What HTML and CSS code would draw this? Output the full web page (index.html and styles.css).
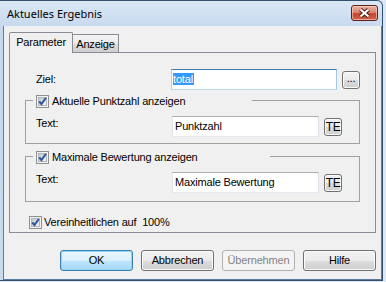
FILE: index.html
```html
<!DOCTYPE html>
<html>
<head>
<meta charset="utf-8">
<link rel="stylesheet" href="styles.css">
</head>
<body>
<div class="window">
  <div class="titlebar">
    <span class="title">Aktuelles Ergebnis</span>
    <div class="close">
      <svg width="25" height="14" viewBox="0 0 25 14">
        <path class="x-out" d="M8.5 3.5 L16.5 10.5 M16.5 3.5 L8.5 10.5"/>
        <path class="x-in" d="M8.5 3.5 L16.5 10.5 M16.5 3.5 L8.5 10.5"/>
      </svg>
    </div>
  </div>
  <div class="client">
    <div class="tabs">
      <div class="tab active">Parameter</div>
      <div class="tab inactive">Anzeige</div>
    </div>
    <div class="page">
      <div class="ziel">
        <span class="lbl lbl-z">Ziel:</span>
        <div class="tb tb-z focus"><span class="sel">total</span></div>
        <div class="btn small dots">...</div>
      </div>
      <div class="group g1">
        <div class="ghead w1">
          <span class="cb"><svg width="13" height="13" viewBox="0 0 13 13"><path class="tick" d="M3.2 6.3 L5.4 9 L9.8 3"/></svg></span>
          <span>Aktuelle Punktzahl anzeigen</span>
        </div>
        <div class="grow">
          <span class="lbl lbl-t">Text:</span>
          <div class="tb tb-t">Punktzahl</div>
          <div class="btn small te">TE</div>
        </div>
      </div>
      <div class="group g2">
        <div class="ghead w2">
          <span class="cb"><svg width="13" height="13" viewBox="0 0 13 13"><path class="tick" d="M3.2 6.3 L5.4 9 L9.8 3"/></svg></span>
          <span>Maximale Bewertung anzeigen</span>
        </div>
        <div class="grow">
          <span class="lbl lbl-t">Text:</span>
          <div class="tb tb-t">Maximale Bewertung</div>
          <div class="btn small te">TE</div>
        </div>
      </div>
      <div class="uni">
        <span class="cb"><svg width="13" height="13" viewBox="0 0 13 13"><path class="tick" d="M3.2 6.3 L5.4 9 L9.8 3"/></svg></span>
        <span>Vereinheitlichen auf&nbsp;&nbsp;100%</span>
      </div>
    </div>
    <div class="buttons">
      <div class="btn big default">OK</div>
      <div class="btn big">Abbrechen</div>
      <div class="btn big disabled">Übernehmen</div>
      <div class="btn big">Hilfe</div>
    </div>
  </div>
</div>
</body>
</html>
```

FILE: styles.css
```css
* { box-sizing: border-box; }

body {
  margin: 0;
  width: 386px;
  height: 282px;
  overflow: hidden;
  background: #dbe7f4;
  font-family: "Liberation Sans", Arial, sans-serif;
  font-size: 11px;
  line-height: 13px;
  letter-spacing: -0.18px;
  color: #000;
}

.window {
  width: 383px;
  height: 281px;
  border: 1px solid #34506f;
  border-left: 0;
  border-radius: 0 6px 0 0;
  background: linear-gradient(#dae7f5, #c4d7ed 30px, #c9dbef);
  display: flex;
  flex-direction: column;
}

.titlebar {
  height: 25px;
  flex: none;
  display: flex;
  align-items: flex-start;
  padding-left: 7px;
}

.title {
  font-family: "Noto Sans", "Open Sans", sans-serif;
  font-size: 11px;
  line-height: 16px;
  letter-spacing: 0;
  margin-top: 5px;
  color: #000;
}

.close {
  margin-left: auto;
  margin-right: 4px;
  margin-top: 4px;
  width: 27px;
  height: 16px;
  border: 1px solid #5e2019;
  border-radius: 3px;
  background: linear-gradient(#eab1a3, #dc8672 45%, #c7432b 55%, #d3664c);
  box-shadow: inset 0 0 0 1px rgba(255, 225, 215, 0.55);
}

.close svg { display: block; }
.x-out { stroke: #4a1810; stroke-width: 4.2; fill: none; }
.x-in { stroke: #ffffff; stroke-width: 2.2; fill: none; }

.client {
  flex: 1;
  margin-left: 3px;
  border: 1px solid #5a7ca3;
  border-top: 0;
  background: #f0f0f0;
  display: flex;
  flex-direction: column;
}

.tabs {
  display: flex;
  align-items: flex-end;
  height: 21px;
  margin: 6px 0 -1px 5px;
  position: relative;
  z-index: 1;
}

.tab {
  border: 1px solid #898c95;
  border-bottom: 0;
  display: flex;
  align-items: center;
  justify-content: center;
}

.tab.active {
  width: 64px;
  height: 21px;
  background: #f0f0f0;
  border-radius: 2px 2px 0 0;
  padding-bottom: 1px;
}

.tab.inactive {
  width: 46px;
  height: 18px;
  margin-bottom: 1px;
  border-left: 0;
  padding-top: 2px;
  background: linear-gradient(#f3f3f3, #ebebeb 50%, #dddddd 50%, #cfcfcf);
}

.page {
  margin: 0 5px;
  height: 181px;
  border: 1px solid #898c95;
  background: #f0f0f0;
  display: flex;
  flex-direction: column;
  align-items: flex-start;
}

.ziel {
  display: flex;
  align-items: center;
  margin: 16px 0 0 26px;
}

.lbl-z { width: 135px; }
.lbl-t { width: 136px; }

.tb {
  height: 21px;
  border: 1px solid;
  border-color: #abadb3 #dbdfe6 #e3e9ef #e2e3ea;
  background: #fff;
  padding: 0 1px 1px;
  display: flex;
  align-items: center;
  white-space: nowrap;
}

.tb.focus { border-color: #3d7bad #a4c9e3 #b7d9ed #b5cfe7; }
.tb-z { width: 166px; }
.tb-t { width: 147px; padding-left: 2px; }

.sel {
  background: #3399ff;
  color: #fff;
  line-height: 12px;
  padding-right: 1px;
}

.btn {
  border: 1px solid #707070;
  border-radius: 3px;
  background: linear-gradient(#f2f2f2, #ebebeb 50%, #dddddd 50%, #cfcfcf);
  box-shadow: inset 0 0 0 1px #fbfbfb;
  display: flex;
  align-items: center;
  justify-content: center;
  white-space: nowrap;
}

.btn.small {
  width: 18px;
  height: 18px;
  margin-left: 5px;
}

.btn.dots { padding-bottom: 2px; }

.btn.te {
  margin-top: 2px;
  font-size: 12px;
  letter-spacing: -0.5px;
}

.group {
  margin-left: 15px;
  width: 335px;
  border: 1px solid #a0a0a0;
}

.g1 { margin-top: 10px; padding-bottom: 6px; }
.g2 { margin-top: 12px; padding-bottom: 8px; }

.ghead {
  display: flex;
  align-items: center;
  gap: 3px;
  height: 13px;
  margin: -6px 0 0 7px;
  padding-left: 3px;
  background: #f0f0f0;
  white-space: nowrap;
}

.w1 { width: 219px; }
.w2 { width: 237px; }

.grow {
  display: flex;
  align-items: flex-start;
  margin: 8px 0 0 10px;
}

.lbl-t { padding-top: 1px; }

.uni {
  display: flex;
  align-items: center;
  gap: 2px;
  margin: 14px 0 0 19px;
  white-space: nowrap;
}

.cb {
  display: flex;
  flex: none;
  width: 13px;
  height: 13px;
  border: 1px solid #8f8f8f;
  padding: 2px;
  background: linear-gradient(135deg, #c3c9d1, #f4f5f6) content-box, #b1b6bd padding-box;
  box-shadow: inset 0 0 0 1px #f4f4f4;
}

.cb svg {
  display: block;
  flex: none;
  margin: -3px;
}

.tick {
  fill: none;
  stroke: #35579a;
  stroke-width: 2.1;
}

.buttons {
  display: flex;
  justify-content: flex-end;
  gap: 8px;
  margin-top: 17px;
  padding-right: 5px;
}

.btn.big {
  width: 73px;
  height: 21px;
}

.btn.default {
  border-color: #3c7fb1;
  background: linear-gradient(#eaf6fd, #d9f0fc 50%, #bee6fd 50%, #a7d9f5);
  box-shadow: inset 0 0 0 1px #8fd6f5;
}

.btn.disabled {
  border-color: #adb2b5;
  background: #f4f4f4;
  box-shadow: none;
  color: #838383;
}
```
